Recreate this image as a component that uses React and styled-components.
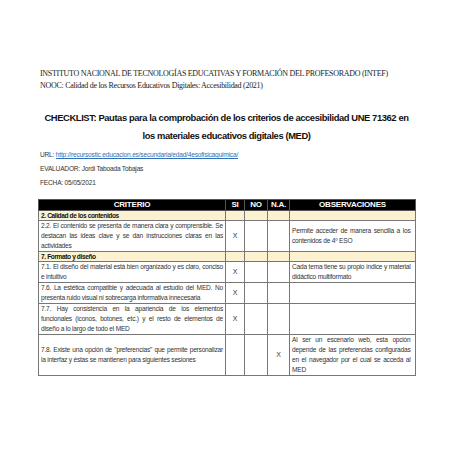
import React from 'react'
import styled, { createGlobalStyle } from 'styled-components'

const Global = createGlobalStyle`
body {
    margin: 0;
    background: #fff;
}
`

const Page = styled.div`
width: 453px;
height: 453px;
padding: 68px 38px 0 38px;
box-sizing: border-box;
color: #1e1e1e;
font-family: "Liberation Sans", Arial, sans-serif;
`

const Institution = styled.div`
font-family: "Liberation Serif", serif;
font-size: 8px;
letter-spacing: -0.29px;
line-height: 12px;
padding-left: 2px;
color: #222;
`

const Title = styled.h1`
margin: 17px 0 0 0;
font-weight: 700;
font-size: 9.4px;
letter-spacing: -0.4px;
line-height: 18px;
text-align: center;
color: #111;
`

const Meta = styled.div`
margin-top: 3px;
padding-left: 2px;
font-size: 6.6px;
letter-spacing: -0.2px;
line-height: 14px;
color: #333;
a {
    color: #2f6fb5;
    text-decoration: underline;
}
`

const Table = styled.table`
margin-top: 9px;
width: 377px;
border-collapse: collapse;
table-layout: fixed;
font-size: 6.6px;
letter-spacing: -0.22px;
line-height: 10px;
border: 1px solid #555;
`

const Head = styled.th`
background: #000;
color: #fff;
font-weight: 700;
font-size: 8px;
letter-spacing: -0.2px;
line-height: 10px;
padding: 0;
border: 1px solid #555;
text-align: center;
`

const Section = styled.td`
background: #fcf1d0;
font-weight: 700;
letter-spacing: -0.4px;
color: #111;
padding: 0 2px;
line-height: 9px;
border: 1px solid #777;
`

const Cell = styled.td`
padding: 0 2px;
border: 1px solid #777;
vertical-align: middle;
text-align: ${p => (p.$mark ? 'center' : 'justify')};
font-size: ${p => (p.$mark ? '7px' : 'inherit')};
color: #333;
`

const Note = styled(Cell)`
padding: 0 4.5px 0 2px;
`

const rows = [
    { section: '2. Calidad de los contenidos' },
    {
        text: '2.2. El contenido se presenta de manera clara y comprensible. Se destacan las ideas clave y se dan instrucciones claras en las actividades',
        mark: 0,
        obs: 'Permite acceder de manera sencilla a los contenidos de 4º ESO',
    },
    { section: '7. Formato y diseño' },
    {
        text: '7.1. El diseño del material está bien organizado y es claro, conciso e intuitivo',
        mark: 0,
        obs: 'Cada tema tiene su propio índice y material didáctico multiformato',
    },
    {
        text: '7.6. La estética compatible y adecuada al estudio del MED. No presenta ruido visual ni sobrecarga informativa innecesaria',
        mark: 0,
        obs: '',
    },
    {
        text: '7.7. Hay consistencia en la apariencia de los elementos funcionales (iconos, botones, etc.) y el resto de elementos de diseño a lo largo de todo el MED',
        mark: 0,
        obs: '',
    },
    {
        text: '7.8. Existe una opción de "preferencias" que permite personalizar la interfaz y éstas se mantienen para siguientes sesiones',
        mark: 2,
        obs: 'Al ser un escenario web, esta opción depende de las preferencias configuradas en el navegador por el cual se acceda al MED',
    },
]

export default function App() {
    return (
        <>
            <Global />
            <Page>
                <Institution>
                    INSTITUTO NACIONAL DE TECNOLOGÍAS EDUCATIVAS Y FORMACIÓN DEL PROFESORADO (INTEF)
                    <br />
                    NOOC: Calidad de los Recursos Educativos Digitales: Accesibilidad (2021)
                </Institution>
                <Title>
                    CHECKLIST: Pautas para la comprobación de los criterios de accesibilidad UNE 71362 en
                    <br />
                    los materiales educativos digitales (MED)
                </Title>
                <Meta>
                    URL: <a href="#">http://recursostic.educacion.es/secundaria/edad/4esofisicaquimica/</a>
                    <br />
                    EVALUADOR: Jordi Taboada Tobajas
                    <br />
                    FECHA: 05/05/2021
                </Meta>
                <Table>
                    <colgroup>
                        <col style={{ width: 187 }} />
                        <col style={{ width: 19 }} />
                        <col style={{ width: 23 }} />
                        <col style={{ width: 22 }} />
                        <col style={{ width: 126 }} />
                    </colgroup>
                    <thead>
                        <tr>
                            <Head>CRITERIO</Head>
                            <Head>SI</Head>
                            <Head>NO</Head>
                            <Head>N.A.</Head>
                            <Head>OBSERVACIONES</Head>
                        </tr>
                    </thead>
                    <tbody>
                        {rows.map((r, i) =>
                            r.section ? (
                                <tr key={i}>
                                    <Section>{r.section}</Section>
                                    <Section />
                                    <Section />
                                    <Section />
                                    <Section />
                                </tr>
                            ) : (
                                <tr key={i}>
                                    <Cell>{r.text}</Cell>
                                    {[0, 1, 2].map(m => (
                                        <Cell key={m} $mark>
                                            {r.mark === m ? 'X' : ''}
                                        </Cell>
                                    ))}
                                    <Note>{r.obs}</Note>
                                </tr>
                            )
                        )}
                    </tbody>
                </Table>
            </Page>
        </>
    )
}
